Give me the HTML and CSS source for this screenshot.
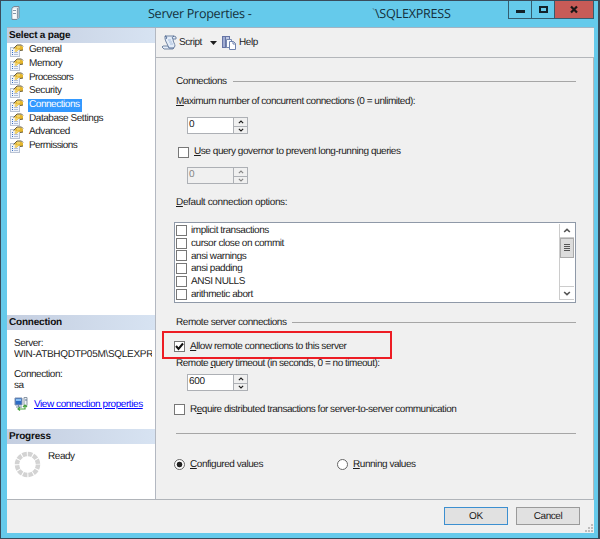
FILE: index.html
```html
<!DOCTYPE html>
<html lang="en">
<head>
<meta charset="utf-8">
<title>Server Properties</title>
<link rel="stylesheet" href="styles.css">
</head>
<body>
<svg width="0" height="0" class="defs">
  <symbol id="page" viewBox="0 0 14 13">
    <rect x=".5" y="3.500" width="9" height="9" fill="#f0f4fb" stroke="#b9c3d4"/>
    <path d="M2 6.500h1M2 8.500h1M2 10.500h1" stroke="#356fc5"/>
    <path d="M4 8.500h4M4 10.500h4" stroke="#b1bfd8"/>
    <path d="M3.500 5.500 7 1.500h4l2 1.500v3l-2 .5-2-1-3 2.500-1.500-1 1.500-2.500z" fill="#e5b62d"/>
    <path d="M3.500 4.500 7 1h4.500l1.500 1.500M10 6.500l3-.5" fill="none" stroke="#655b3c"/>
    <path d="M7 3h3M5 7.500l3-3" stroke="#fff0a0"/>
  </symbol>
  <symbol id="up" viewBox="0 0 7 4"><path d="M1 3.300 3.500 1 6 3.300" fill="none" stroke="currentColor" stroke-width="1.400"/></symbol>
  <symbol id="down" viewBox="0 0 7 4"><path d="M1 .7 3.500 3 6 .7" fill="none" stroke="currentColor" stroke-width="1.400"/></symbol>
</svg>
<div class="window">
  <header class="titlebar">
    <svg class="server" width="9" height="14" viewBox="0 0 9 14"><path d="M1 2 3 .5h5v11l-2 2H1z" fill="#dce3ea" stroke="#788896"/><path d="M1.500 2.500h4v10h-4z" fill="#f8fafb"/><path d="M2 4.500h3M2 7.500h3" stroke="#8296a8"/><path d="M6.500 2v10" stroke="#8a9aaa"/></svg>
    <span class="title">Server Properties -</span><span class="tick">`</span><span class="instance">\SQLEXPRESS</span>
    <div class="controls">
      <div class="ctl min"><svg width="9" height="9"><path d="M0 6.500h9" stroke="#13222a" stroke-width="3"/></svg></div>
      <div class="ctl max"><svg width="9" height="9"><path d="M1 2h7v5H1z" fill="none" stroke="#13222a" stroke-width="2"/></svg></div>
      <div class="ctl close"><svg width="9" height="9"><path d="M1 1.500l6 6M7 1.500 1 7.500" stroke="#1b1717" stroke-width="2.200"/></svg></div>
    </div>
  </header>
  <div class="client">
    <div class="body">
      <aside class="side">
        <h2>Select a page</h2>
        <ul class="pages">
          <li><svg><use href="#page"/></svg><span>General</span></li>
          <li><svg><use href="#page"/></svg><span>Memory</span></li>
          <li><svg><use href="#page"/></svg><span class="tight">Processors</span></li>
          <li><svg><use href="#page"/></svg><span>Security</span></li>
          <li><svg><use href="#page"/></svg><span class="selected">Connections</span></li>
          <li><svg><use href="#page"/></svg><span>Database Settings</span></li>
          <li><svg><use href="#page"/></svg><span>Advanced</span></li>
          <li><svg><use href="#page"/></svg><span class="tight">Permissions</span></li>
        </ul>
        <h2>Connection</h2>
        <div class="conn">
          <div>Server:</div><div class="host">WIN-ATBHQDTP05M\SQLEXPRESS</div>
          <div class="gap">Connection:</div><div>sa</div>
          <div class="link">
            <svg width="15" height="14" viewBox="0 0 15 14"><path d="M1 1h7v7H1z" fill="#2d6cc5" stroke="#8191ad"/><path d="M2 2h5v2H2z" fill="#8ac0f3"/><path d="M2 10h6M4.500 8v2" stroke="#7388a5"/><path d="M10 .5h3v8h-3z" fill="#eef3f8" stroke="#8996a5"/><path d="M11 3h2" stroke="#5e7793"/><path d="M4 12h7V9M9 10l2-2 2 2M6 10l-2 2 2 1.500" fill="none" stroke="#48a23f" stroke-width="1.200"/></svg>
            <a>View connection properties</a>
          </div>
        </div>
        <h2>Progress</h2>
        <div class="progress">
          <svg width="27" height="27" viewBox="0 0 27 27"><circle cx="13.500" cy="13.500" r="10.500" fill="none" stroke="#d3d3d3" stroke-width="4.500" stroke-dasharray="4.500 .997"/></svg>
          <span>Ready</span>
        </div>
      </aside>
      <main>
        <div class="toolbar">
          <svg width="15" height="15" viewBox="0 0 15 15"><path d="M3 1h9l2 1v2h-3c0 3 2 5 2 7l-2 3H2l-2-2 1-1h5C5 8 3 6 3 3z" fill="#e3ecf8" stroke="#7184a2"/><path d="M3 1c2 0 2 2 1 3M11 4c-1-1-1-2 1-3M6 11l1 2h5" fill="none" stroke="#526b93"/><path d="M6 5h3M7 7h3M8 9h3" stroke="#a9bfdd"/></svg>
          <span class="script">Script</span>
          <svg class="arrow" width="7" height="4"><path d="M0 0h7L3.500 4z" fill="#1d1d1d"/></svg>
          <svg width="14" height="14" viewBox="0 0 14 14"><path d="M0 0h8v12H0z" fill="#6674a5"/><path d="M1 1h2v10H1z" fill="#a0acd1"/><path d="M4 1h3v4H4z" fill="#c0c9e4"/><path d="M4.500 3.500h5v8h-5z" fill="#f9fbff" stroke="#7688af"/><path d="M7.500 5.500h4l2 2v6h-6z" fill="#fff" stroke="#6e82ad"/><path d="M11 5.500V8h2.500" fill="none" stroke="#6e82ad"/></svg>
          <span class="help">Help</span>
        </div>
        <div class="form">
          <div class="group"><span>Connections</span><hr></div>
          <div class="row r-max"><span class="w-max"><u>M</u>aximum number of concurrent connections (0 = unlimited):</span></div>
          <div class="spin"><span>0</span><div class="btns"><i><svg><use href="#up"/></svg></i><i><svg><use href="#down"/></svg></i></div></div>
          <div class="row check r-gov"><b class="box"></b><span><u>U</u>se query governor to prevent long-running queries</span></div>
          <div class="spin off"><span>0</span><div class="btns"><i><svg><use href="#up"/></svg></i><i><svg><use href="#down"/></svg></i></div></div>
          <div class="row r-def"><span class="w-def"><u>D</u>efault connection options:</span></div>
          <div class="list">
            <div class="opts">
              <div><b class="box"></b><span>implicit transactions</span></div>
              <div><b class="box"></b><span>cursor close on commit</span></div>
              <div><b class="box"></b><span>ansi warnings</span></div>
              <div><b class="box"></b><span>ansi padding</span></div>
              <div><b class="box"></b><span>ANSI NULLS</span></div>
              <div><b class="box"></b><span>arithmetic abort</span></div>
            </div>
            <div class="scroll">
              <i class="sb"><svg><use href="#up"/></svg></i>
              <i class="thumb"></i>
              <i class="sb end"><svg><use href="#down"/></svg></i>
            </div>
          </div>
          <div class="group g2"><span>Remote server connections</span><hr></div>
          <div class="row check r-allow"><b class="box"><svg width="9" height="9"><path d="M1 4l2.500 3L8 1.500" fill="none" stroke="#111" stroke-width="2"/></svg></b><span><u>A</u>llow remote connections to this server</span><div class="mark"></div></div>
          <div class="row r-time"><span class="w-max">Remote <u>q</u>uery timeout (in seconds, 0 = no timeout):</span></div>
          <div class="spin s3"><span class="num">600</span><div class="btns"><i><svg><use href="#up"/></svg></i><i><svg><use href="#down"/></svg></i></div></div>
          <div class="row check r-req"><b class="box"></b><span class="w-max">R<u>e</u>quire distributed transactions for server-to-server communication</span></div>
          <hr class="rule">
          <div class="radios">
            <div class="radio first"><b class="dot on"></b><span><u>C</u>onfigured values</span></div>
            <div class="radio"><b class="dot"></b><span><u>R</u>unning values</span></div>
          </div>
        </div>
      </main>
    </div>
    <footer>
      <div class="button ok">OK</div>
      <div class="button">Cancel</div>
      <svg class="grip" width="8" height="8"><path d="M6 1h2M3 4h2M6 4h2M0 7h2M3 7h2M6 7h2" stroke="#bdbdbd" stroke-width="2"/></svg>
    </footer>
  </div>
</div>
</body>
</html>
```
FILE: styles.css
```css
* { box-sizing: border-box; }
body { margin: 0; font: 10px/12px "Liberation Sans", Arial, sans-serif; letter-spacing: -.45px; color: #1c1c1c; text-rendering: geometricPrecision; }
svg { display: block; flex: none; }
i, b { display: block; font-style: normal; flex: none; }
span, a { white-space: nowrap; }
hr { margin: 0; border: 0; height: 1px; background: #a6a6a6; }
.defs { position: absolute; }
.window { width: 600px; height: 539px; background: #65caeb; border: 1px solid #394c5c; border-right-width: 2px; padding: 0 4px 5px 6px; display: flex; flex-direction: column; }
.titlebar { height: 26px; display: flex; flex: none; }
.server { margin: 5px 0 0 4px; }
.title, .tick, .instance { font: 12.600px/25px "Open Sans", sans-serif; color: #14303b; letter-spacing: -.3px; }
.title { margin-left: 128px; width: 224px; }
.tick { width: 3px; color: #4d8ea5; }
.instance { letter-spacing: -.25px; }
.controls { display: flex; margin-left: auto; height: 18px; border: 1px solid #345d70; border-top: 0; }
.ctl { width: 23px; display: grid; place-items: center; }
.min { width: 22px; }
.max { border-left: 1px solid #345d70; }
.close { width: 39px; background: #c75b57; border-left: 1px solid #345d70; }
.client { height: 506px; width: 587px; background: #f0f0f0; border-top: 1px solid #a1b4c4; display: flex; flex-direction: column; }
.body { display: flex; height: 472px; border-bottom: 1px solid #b0b4b9; flex: none; }
.side { width: 149px; background: #fff; border-right: 1px solid #b3b8c1; overflow: hidden; flex: none; }
.side h2 { margin: 0; height: 15px; padding-left: 2px; font: bold 10px/15px "Liberation Sans", Arial, sans-serif; letter-spacing: -.2px; background: linear-gradient(90deg, #c4cee0, #d7e3f2); color: #101010; }
.pages { list-style: none; margin: 0; padding: 1px 0 0 3px; height: 272px; }
.pages li { display: flex; height: 13.650px; align-items: center; gap: 4px; }
.pages svg { width: 14px; height: 13px; }
.pages span { line-height: 12px; height: 13px; padding: 0 1px; }
.pages .tight { letter-spacing: -.58px; }
.pages .selected { background: #3399ff; color: #fff; padding-right: 2px; }
.conn { height: 99px; padding: 8px 3px 0 7px; }
.conn > div { white-space: nowrap; overflow: hidden; line-height: 11px; }
.conn .host { letter-spacing: -.3px; }
.conn .gap { margin-top: 9px; }
.conn .link { display: flex; gap: 5px; margin-top: 6px; align-items: center; height: 14px; letter-spacing: -.43px; }
.link a { color: #0000ff; text-decoration: underline; }
.progress { display: flex; padding: 7px 0 0 7px; gap: 7px; }
main { flex: 1; min-width: 0; }
.toolbar { display: flex; align-items: center; height: 30px; padding-left: 6px; border-bottom: 1px solid #b3b6ba; }
.script { margin-left: 2px; width: 31px; }
.arrow { margin: 0 5px 0 0; }
.help { margin-left: 3px; }
.form { height: 441px; padding: 17px 17px 0 20px; border-right: 1px solid #b6b6b6; }
.group { display: flex; align-items: center; gap: 6px; height: 12px; }
.group span { padding-top: 1px; }
.group hr { flex: 1; }
.row { height: 12px; display: flex; align-items: center; }
.w-max { letter-spacing: -.48px; }
.w-def { letter-spacing: -.35px; }
.r-max { margin-top: 9px; }
.spin { display: flex; width: 61px; height: 17px; margin: 9px 0 0 11px; border: 1px solid #adb0b5; background: #fff; }
.spin > span { flex: 1; padding-left: 1px; line-height: 14px; }
.num { letter-spacing: -.3px; }
.btns { width: 14px; background: #f0f0f0; border-left: 1px solid #adb0b5; }
.btns i { height: 8px; display: grid; place-items: center; }
.btns i + i { border-top: 1px solid #adb0b5; height: 7px; }
.btns svg { width: 6px; height: 4px; }
.off { background: #f0f0f0; color: #858585; }
.box { width: 11px; height: 11px; border: 1px solid #777; background: #fff; }
.check .box { margin-right: 5px; }
.r-gov { margin: 12px 0 0 2px; }
.off.spin { margin-top: 9px; }
.r-def { margin-top: 13px; }
.list { display: flex; width: 402px; height: 81px; margin: 13px 0 0 -2px; border: 1px solid #8f99a8; background: #fff; padding: 1px; }
.opts { flex: 1; }
.opts div { display: flex; align-items: center; height: 12.800px; gap: 4px; }
.opts span { padding-top: 1px; }
.scroll { width: 15px; height: 76px; border-left: 1px solid #ccc; color: #555; }
.sb { height: 14px; display: grid; place-items: center; border-bottom: 1px solid #ccc; }
.sb svg { width: 8px; height: 5px; }
.thumb { height: 20px; background: linear-gradient(#555, #555) 3px 5px / 6px 1px no-repeat, linear-gradient(#555, #555) 3px 7px / 6px 1px no-repeat, linear-gradient(#555, #555) 3px 9px / 6px 1px no-repeat, linear-gradient(#555, #555) 3px 11px / 6px 1px no-repeat, #dcdcdc; border: 1px solid #aaa; }
.end { margin-top: 28px; border-top: 1px solid #ccc; }
.g2 { margin-top: 13px; }
.r-allow { position: relative; margin: 12px 0 0 -2px; }
.r-allow > span { padding-top: 1px; }
.mark { position: absolute; left: -12px; top: -9px; width: 230px; height: 28px; border: 2px solid #ed1c24; }
.r-time { position: relative; z-index: 1; margin-top: 6px; }
.s3.spin { margin-top: 4px; }
.r-req { margin: 12px 0 0 -2px; }
.r-req > span { padding-top: 1px; }
.rule { margin-top: 18px; }
.radios { display: flex; margin: 24px 0 0 -2px; }
.radio { display: flex; align-items: center; height: 12px; gap: 5px; }
.radio span { padding-top: 1px; }
.first { width: 163px; }
.dot { width: 11px; height: 11px; border: 1px solid #666; border-radius: 50%; background: #fff; }
.on { background: radial-gradient(circle, #222 0 2.500px, #fff 3.200px); }
footer { height: 33px; display: flex; position: relative; justify-content: flex-end; padding: 7px 14px 0 0; gap: 8px; }
.button { width: 64px; height: 18px; line-height: 17px; text-align: center; border: 1px solid #9a9a9a; background: #e1e1e1; }
.ok { border-color: #3c8fd0; letter-spacing: -.2px; }
.grip { position: absolute; right: 1px; bottom: 1px; }
```
